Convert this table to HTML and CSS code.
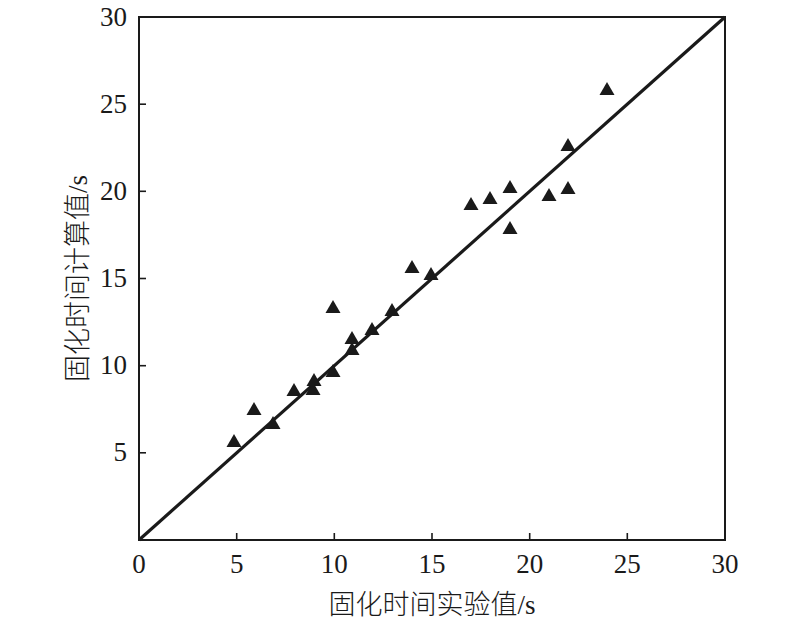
FILE: index.html
```html
<!DOCTYPE html>
<html>
<head>
<meta charset="utf-8">
<link rel="stylesheet" href="styles.css">
</head>
<body>
<div class="chart">
  <div class="yaxis">
    <div class="ytitle"><span class="cjk">固化时间计算值</span><span class="latin">/s</span></div>
    <div class="ylabels">
      <div class="ytick latin">30</div>
      <div class="ytick latin">25</div>
      <div class="ytick latin">20</div>
      <div class="ytick latin">15</div>
      <div class="ytick latin">10</div>
      <div class="ytick latin">5</div>
      <div class="ytick"></div>
    </div>
  </div>
  <svg class="plot" width="586" height="523" viewBox="0 0 586 523" xmlns="http://www.w3.org/2000/svg">
    <defs>
      <polygon id="tri" points="0,-7 7.5,6 -7.5,6" />
    </defs>
    <g class="ticks">
      <line x1="97.7" y1="523" x2="97.7" y2="516"/>
      <line x1="195.3" y1="523" x2="195.3" y2="516"/>
      <line x1="293" y1="523" x2="293" y2="516"/>
      <line x1="390.7" y1="523" x2="390.7" y2="516"/>
      <line x1="488.3" y1="523" x2="488.3" y2="516"/>
      <line x1="0" y1="435.8" x2="7" y2="435.8"/>
      <line x1="0" y1="348.7" x2="7" y2="348.7"/>
      <line x1="0" y1="261.5" x2="7" y2="261.5"/>
      <line x1="0" y1="174.3" x2="7" y2="174.3"/>
      <line x1="0" y1="87.2" x2="7" y2="87.2"/>
    </g>
    <line class="fit" x1="0" y1="523" x2="586" y2="0"/>
    <rect class="frame" x="0" y="0" width="586" height="523"/>
    <g class="points">
      <use href="#tri" x="95" y="424"/>
      <use href="#tri" x="115" y="392"/>
      <use href="#tri" x="134" y="406"/>
      <use href="#tri" x="155" y="373"/>
      <use href="#tri" x="174" y="372"/>
      <use href="#tri" x="175" y="363"/>
      <use href="#tri" x="194" y="354"/>
      <use href="#tri" x="194" y="290"/>
      <use href="#tri" x="213" y="332"/>
      <use href="#tri" x="213" y="321"/>
      <use href="#tri" x="233" y="312"/>
      <use href="#tri" x="253" y="293"/>
      <use href="#tri" x="273" y="250"/>
      <use href="#tri" x="292" y="257"/>
      <use href="#tri" x="332" y="187"/>
      <use href="#tri" x="351" y="181"/>
      <use href="#tri" x="371" y="170"/>
      <use href="#tri" x="371" y="211"/>
      <use href="#tri" x="410" y="178"/>
      <use href="#tri" x="429" y="171"/>
      <use href="#tri" x="429" y="128"/>
      <use href="#tri" x="468" y="72"/>
    </g>
  </svg>
  <div class="xlabels">
    <div class="xtick latin">0</div>
    <div class="xtick latin">5</div>
    <div class="xtick latin">10</div>
    <div class="xtick latin">15</div>
    <div class="xtick latin">20</div>
    <div class="xtick latin">25</div>
    <div class="xtick latin">30</div>
  </div>
  <div class="xtitle"><span class="cjk">固化时间实验值</span><span class="latin">/s</span></div>
</div>
</body>
</html>
```
FILE: styles.css
```css
html, body {
  margin: 0;
  padding: 0;
  background: #ffffff;
}
body {
  font-family: "Liberation Serif", "Noto Sans CJK SC", serif;
  font-size: 27px;
  line-height: 31px;
  color: #1a1a1a;
}
.latin {
  font-family: "Liberation Serif", "Times New Roman", serif !important;
  font-weight: 400;
}
.cjk {
  font-family: "Noto Sans CJK SC", sans-serif;
  font-weight: 300;
}
.chart {
  display: grid;
  grid-template-columns: 139px 586px;
  padding-top: 17px;
}
.yaxis {
  display: flex;
  align-items: center;
}
.ytitle {
  margin-left: 60px;
  writing-mode: vertical-rl;
  text-orientation: sideways;
  transform: rotate(180deg);
  white-space: nowrap;
}
.ylabels {
  flex: 1;
  align-self: stretch;
  display: flex;
  flex-direction: column;
  justify-content: space-between;
  padding-right: 12px;
}
.ytick {
  height: 0;
  display: flex;
  align-items: center;
  justify-content: flex-end;
  white-space: nowrap;
}
.plot {
  display: block;
  overflow: visible;
}
.frame {
  fill: none;
  stroke: #1a1a1a;
  stroke-width: 2;
}
.ticks line {
  stroke: #1a1a1a;
  stroke-width: 1.6;
}
.fit {
  stroke: #1a1a1a;
  stroke-width: 3.2;
}
.points use {
  fill: #1a1a1a;
}
.xlabels {
  grid-column: 2;
  display: flex;
  justify-content: space-between;
  margin-top: 9px;
}
.xtick {
  width: 0;
  display: flex;
  justify-content: center;
  white-space: nowrap;
}
.xtitle {
  grid-column: 2;
  margin-top: 7px;
  text-align: center;
  white-space: nowrap;
}
```
